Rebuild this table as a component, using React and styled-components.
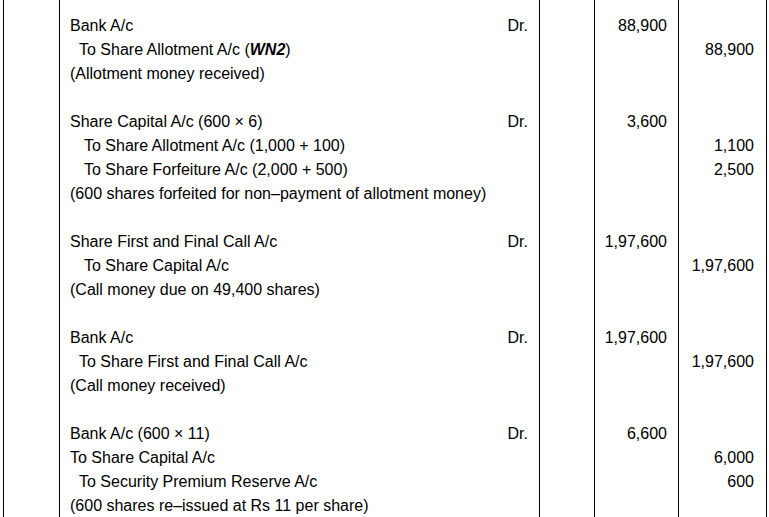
import React from "react";
import styled, { createGlobalStyle } from "styled-components";

const Global = createGlobalStyle`
  html, body {
    margin: 0;
    padding: 0;
    overflow: hidden;
    background: #ffffff;
  }
  body {
    font-family: "Liberation Sans", Arial, sans-serif;
    font-size: 16px;
    color: #000000;
  }
`;

const Sheet = styled.div`
  padding-left: 3px;
  width: 764px;
`;

const Row = styled.div`
  display: grid;
  grid-template-columns: 56px 480px 55px 84px 89px;
  height: ${(p) => p.$h || 24}px;
  line-height: 24px;
`;

const Cell = styled.div`
  box-sizing: border-box;
  border-left: 1px solid #000;
  white-space: nowrap;
`;

const Particulars = styled(Cell)`
  display: flex;
  justify-content: space-between;
  padding-left: ${(p) => 10 + (p.$indent || 0)}px;
  padding-right: 11px;
`;

const Amount = styled(Cell)`
  text-align: right;
  padding-right: ${(p) => p.$pr}px;
  border-right: ${(p) => (p.$last ? "1px solid #000" : "none")};
`;

const Ref = styled.b`
  font-style: italic;
  font-weight: 700;
`;

const entries = [
  [
    { t: "Bank A/c", dr: true, d: "88,900" },
    { t: <>To Share Allotment A/c (<Ref>WN2</Ref>)</>, i: 9, c: "88,900" },
    { t: "(Allotment money received)" },
  ],
  [
    { t: "Share Capital A/c (600 × 6)", dr: true, d: "3,600" },
    { t: "To Share Allotment A/c (1,000 + 100)", i: 14, c: "1,100" },
    { t: "To Share Forfeiture A/c (2,000 + 500)", i: 14, c: "2,500" },
    { t: "(600 shares forfeited for non–payment of allotment money)" },
  ],
  [
    { t: "Share First and Final Call A/c", dr: true, d: "1,97,600" },
    { t: "To Share Capital A/c", i: 14, c: "1,97,600" },
    { t: "(Call money due on 49,400 shares)" },
  ],
  [
    { t: "Bank A/c", dr: true, d: "1,97,600" },
    { t: "To Share First and Final Call A/c", i: 9, c: "1,97,600" },
    { t: "(Call money received)" },
  ],
  [
    { t: "Bank A/c (600 × 11)", dr: true, d: "6,600" },
    { t: "To Share Capital A/c", c: "6,000" },
    { t: "To Security Premium Reserve A/c", i: 9, c: "600" },
    { t: "(600 shares re–issued at Rs 11 per share)" },
  ],
];

function Line({ line, h }) {
  return (
    <Row $h={h}>
      <Cell />
      <Particulars $indent={line.i}>
        <span>{line.t}</span>
        {line.dr && <span>Dr.</span>}
      </Particulars>
      <Cell />
      <Amount $pr={11}>{line.d}</Amount>
      <Amount $pr={12} $last>
        {line.c}
      </Amount>
    </Row>
  );
}

export default function App() {
  return (
    <>
      <Global />
      <Sheet>
        <Line line={{}} h={14} />
        {entries.map((entry, k) => (
          <React.Fragment key={k}>
            {entry.map((line, j) => (
              <Line key={j} line={line} />
            ))}
            {k < entries.length - 1 && <Line line={{}} />}
          </React.Fragment>
        ))}
      </Sheet>
    </>
  );
}
